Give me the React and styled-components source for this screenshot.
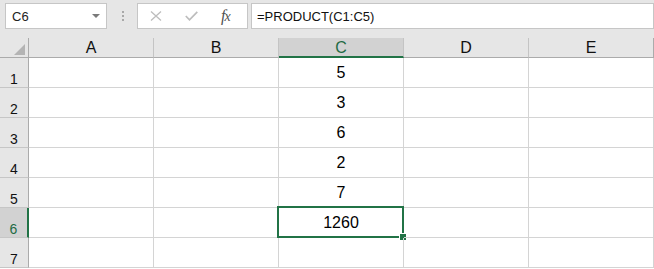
import React from "react";
import styled, { createGlobalStyle } from "styled-components";

const GlobalStyle = createGlobalStyle`
    html, body {
        margin: 0;
        padding: 0;
        background: #fff;
    }
    body {
        font-family: "Liberation Sans", Arial, sans-serif;
    }
`;

const Window = styled.div`
    width: 654px;
    height: 269px;
    overflow: hidden;
    display: flex;
    flex-direction: column;
    background: #fff;
`;

const Toolbar = styled.div`
    flex-shrink: 0;
    height: 38px;
    box-sizing: border-box;
    display: flex;
    align-items: flex-start;
    padding: 3px 0 0 5px;
    background: #e6e6e6;
`;

const Box = styled.div`
    height: 26px;
    box-sizing: border-box;
    background: #fff;
    border: 1px solid #c6c6c6;
    display: flex;
    align-items: center;
`;

const NameBox = styled(Box)`
    width: 102px;
    padding: 0 6px 0 6px;
    justify-content: space-between;
    font-size: 13px;
    color: #222;
`;

const Caret = styled.span`
    width: 0;
    height: 0;
    border-left: 4px solid transparent;
    border-right: 4px solid transparent;
    border-top: 4px solid #7a7a7a;
`;

const Dots = styled.div`
    width: 30px;
    height: 26px;
    display: flex;
    flex-direction: column;
    align-items: center;
    justify-content: center;
    gap: 2px;
    padding-left: 1px;
    box-sizing: border-box;
`;

const Dot = styled.span`
    width: 2px;
    height: 2px;
    background: #a8a8a8;
`;

const ButtonBox = styled(Box)`
    width: 111px;
    margin-right: 3px;
    padding: 0 0 0 12px;
`;

const IconSlot = styled.span`
    width: ${(p) => p.$w}px;
    display: flex;
    align-items: center;
`;

const Fx = styled.span`
    font-family: "Liberation Serif", "Times New Roman", serif;
    font-style: italic;
    font-size: 16px;
    color: #505050;
    letter-spacing: -1px;
    padding-bottom: 1px;
    & small {
        font-size: 14px;
    }
`;

const FormulaBox = styled(Box)`
    flex: 1;
    padding-left: 5px;
    font-size: 13px;
    color: #111;
`;

const Grid = styled.div`
    flex-shrink: 0;
    display: grid;
    grid-template-columns: 29px repeat(5, 125px);
    grid-template-rows: 20px repeat(7, 30px);
`;

const Corner = styled.div`
    box-sizing: border-box;
    background: #e6e6e6;
    border-right: 1px solid #ababab;
    border-bottom: 1px solid #ababab;
    display: flex;
    align-items: flex-end;
    justify-content: flex-end;
    padding: 0 3px 2px 0;
`;

const Triangle = styled.span`
    width: 0;
    height: 0;
    border-left: 11px solid transparent;
    border-bottom: 11px solid #b4b4b4;
`;

const ColHead = styled.div`
    box-sizing: border-box;
    background: ${(p) => (p.$active ? "#d2d2d2" : "#e6e6e6")};
    border-right: 1px solid ${(p) => (p.$last ? "#ababab" : "#c4c4c4")};
    border-bottom: ${(p) => (p.$active ? "2px solid #217346" : "1px solid #ababab")};
    color: ${(p) => (p.$active ? "#1f6b44" : "#111")};
    font-size: 16px;
    display: flex;
    align-items: center;
    justify-content: center;
    padding-top: ${(p) => (p.$active ? "1px" : "0")};
`;

const RowHead = styled.div`
    box-sizing: border-box;
    background: ${(p) => (p.$active ? "#d2d2d2" : "#e6e6e6")};
    border-right: ${(p) => (p.$active ? "2px solid #217346" : "1px solid #ababab")};
    border-bottom: 1px solid #c6c6c6;
    color: ${(p) => (p.$active ? "#1f6b44" : "#111")};
    font-size: 14px;
    line-height: 14px;
    display: flex;
    align-items: flex-end;
    justify-content: center;
    padding-bottom: 1px;
`;

const Cell = styled.div`
    position: relative;
    box-sizing: border-box;
    border-right: 1px solid #d4d4d4;
    border-bottom: 1px solid #d4d4d4;
    font-size: 16px;
    color: #000;
    display: flex;
    align-items: center;
    justify-content: center;
    padding-top: 1px;
`;

const Selection = styled.div`
    position: absolute;
    top: -2px;
    left: -2px;
    right: -1px;
    bottom: -1px;
    border: 2px solid #217346;
    pointer-events: none;
`;

const Handle = styled.span`
    position: absolute;
    right: -4px;
    bottom: -4px;
    width: 6px;
    height: 6px;
    background: #217346;
    box-shadow: 0 0 0 1px #fff;
`;

const columns = ["A", "B", "C", "D", "E"];
const values = { 1: "5", 2: "3", 3: "6", 4: "2", 5: "7", 6: "1260" };
const rows = [1, 2, 3, 4, 5, 6, 7];

const App = () => {
    return (
        <Window>
            <GlobalStyle />
            <Toolbar>
                <NameBox>
                    <span>C6</span>
                    <Caret />
                </NameBox>
                <Dots>
                    <Dot />
                    <Dot />
                    <Dot />
                </Dots>
                <ButtonBox>
                    <IconSlot $w={35}>
                        <svg width="12" height="10" viewBox="0 0 12 10">
                            <path d="M1 0.5 L11 9.5 M11 0.5 L1 9.5" stroke="#bdbdbd" strokeWidth="1.3" fill="none" />
                        </svg>
                    </IconSlot>
                    <IconSlot $w={36}>
                        <svg width="13" height="10" viewBox="0 0 13 10">
                            <path d="M0.8 5 L4.5 8.8 L12.3 0.8" stroke="#bdbdbd" strokeWidth="1.7" fill="none" />
                        </svg>
                    </IconSlot>
                    <IconSlot $w={20}>
                        <Fx>f<small>x</small></Fx>
                    </IconSlot>
                </ButtonBox>
                <FormulaBox>=PRODUCT(C1:C5)</FormulaBox>
            </Toolbar>
            <Grid>
                <Corner>
                    <Triangle />
                </Corner>
                {columns.map((c, i) => (
                    <ColHead key={c} $active={c === "C"} $last={i === columns.length - 1}>
                        {c}
                    </ColHead>
                ))}
                {rows.map((r) => (
                    <React.Fragment key={r}>
                        <RowHead $active={r === 6}>{r}</RowHead>
                        {columns.map((c) => (
                            <Cell key={c}>
                                {c === "C" ? values[r] : null}
                                {c === "C" && r === 6 && (
                                    <Selection>
                                        <Handle />
                                    </Selection>
                                )}
                            </Cell>
                        ))}
                    </React.Fragment>
                ))}
            </Grid>
        </Window>
    );
};

export default App;
